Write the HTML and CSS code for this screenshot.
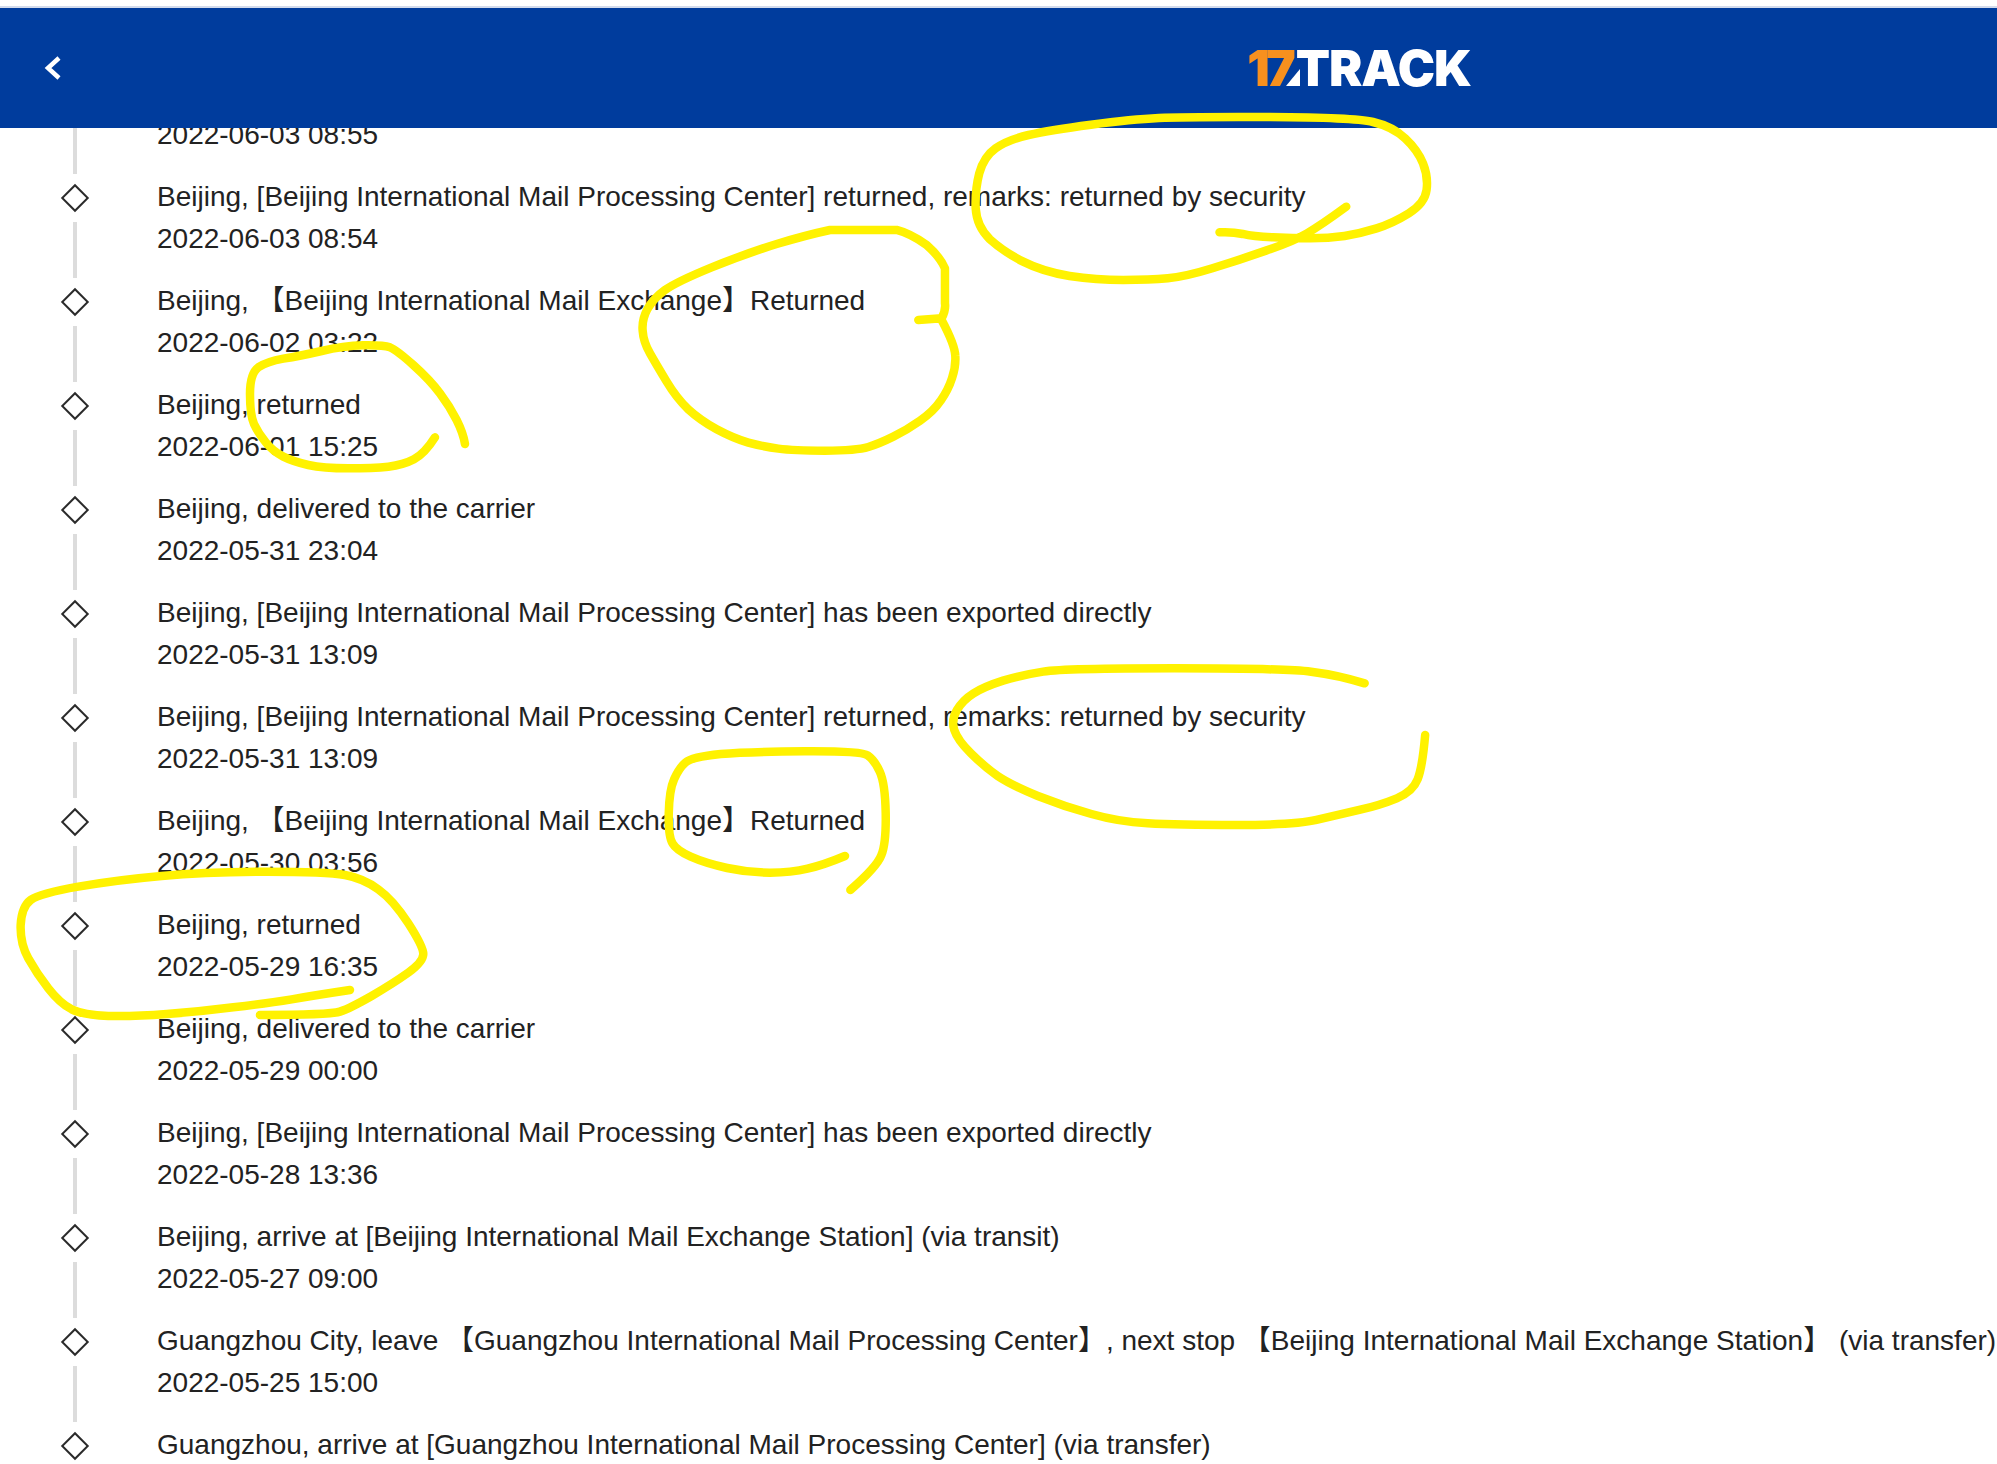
FILE: index.html
```html
<!DOCTYPE html>
<html lang="en">
<head>
<meta charset="utf-8">
<title>17TRACK</title>
<link rel="stylesheet" href="styles.css">
</head>
<body>
<header class="topbar">
  <svg class="back" width="20" height="26" viewBox="0 0 20 26"><path d="M16 3 5 13l11 10"/></svg>
  <div class="logo"><span class="logo-num">17</span><svg class="logo-slash" width="22" height="38" viewBox="0 0 22 38"><polygon points="22,20 22,37 8,37"/></svg><span class="logo-word">TRACK</span></div>
</header>
<ol class="timeline">
  <li class="event"><span class="mark"><i class="dot"></i><i class="line"></i></span><div class="info"><p class="desc">&nbsp;</p><p class="date">2022-06-03 08:55</p></div></li>
  <li class="event"><span class="mark"><i class="dot"></i><i class="line"></i></span><div class="info"><p class="desc">Beijing, [Beijing International Mail Processing Center] returned, remarks: returned by security</p><p class="date">2022-06-03 08:54</p></div></li>
  <li class="event"><span class="mark"><i class="dot"></i><i class="line"></i></span><div class="info"><p class="desc">Beijing, 【Beijing International Mail Exchange】Returned</p><p class="date">2022-06-02 03:22</p></div></li>
  <li class="event"><span class="mark"><i class="dot"></i><i class="line"></i></span><div class="info"><p class="desc">Beijing, returned</p><p class="date">2022-06-01 15:25</p></div></li>
  <li class="event"><span class="mark"><i class="dot"></i><i class="line"></i></span><div class="info"><p class="desc">Beijing, delivered to the carrier</p><p class="date">2022-05-31 23:04</p></div></li>
  <li class="event"><span class="mark"><i class="dot"></i><i class="line"></i></span><div class="info"><p class="desc">Beijing, [Beijing International Mail Processing Center] has been exported directly</p><p class="date">2022-05-31 13:09</p></div></li>
  <li class="event"><span class="mark"><i class="dot"></i><i class="line"></i></span><div class="info"><p class="desc">Beijing, [Beijing International Mail Processing Center] returned, remarks: returned by security</p><p class="date">2022-05-31 13:09</p></div></li>
  <li class="event"><span class="mark"><i class="dot"></i><i class="line"></i></span><div class="info"><p class="desc">Beijing, 【Beijing International Mail Exchange】Returned</p><p class="date">2022-05-30 03:56</p></div></li>
  <li class="event"><span class="mark"><i class="dot"></i><i class="line"></i></span><div class="info"><p class="desc">Beijing, returned</p><p class="date">2022-05-29 16:35</p></div></li>
  <li class="event"><span class="mark"><i class="dot"></i><i class="line"></i></span><div class="info"><p class="desc">Beijing, delivered to the carrier</p><p class="date">2022-05-29 00:00</p></div></li>
  <li class="event"><span class="mark"><i class="dot"></i><i class="line"></i></span><div class="info"><p class="desc">Beijing, [Beijing International Mail Processing Center] has been exported directly</p><p class="date">2022-05-28 13:36</p></div></li>
  <li class="event"><span class="mark"><i class="dot"></i><i class="line"></i></span><div class="info"><p class="desc">Beijing, arrive at [Beijing International Mail Exchange Station] (via transit)</p><p class="date">2022-05-27 09:00</p></div></li>
  <li class="event"><span class="mark"><i class="dot"></i><i class="line"></i></span><div class="info"><p class="desc">Guangzhou City, leave 【Guangzhou International Mail Processing Center】, next stop 【Beijing International Mail Exchange Station】 (via transfer)</p><p class="date">2022-05-25 15:00</p></div></li>
  <li class="event"><span class="mark"><i class="dot"></i><i class="line"></i></span><div class="info"><p class="desc">Guangzhou, arrive at [Guangzhou International Mail Processing Center] (via transfer)</p></div></li>
</ol>
<svg class="scribbles" width="1997" height="1464" viewBox="0 0 1997 1464">
  <g transform="translate(900 100) scale(.357 .3333)"><path d="M1250 320Q1180 375 1140 400Q1100 425 1025 452Q950 480 875 505Q800 530 750 535Q700 540 625 540Q550 540 475 528Q400 515 345 485Q290 455 252 418Q215 380 212 325Q210 270 222 220Q235 170 268 145Q300 120 360 105Q420 90 535 74Q650 58 725 54Q800 50 1035 51Q1270 52 1325 66Q1380 80 1415 115Q1450 150 1465 190Q1480 230 1475 270Q1470 310 1425 340Q1380 370 1335 385Q1290 400 1245 408Q1200 415 1150 415Q1100 415 1045 412Q990 410 960 402Q930 395 895 397"/></g>
  <g transform="translate(620 210) scale(.3333)"><path d="M895 330L965 325Q978 300 975 280L975 175Q960 140 920 105Q870 70 830 60L630 60Q560 75 470 102Q380 130 275 172Q170 215 135 240Q100 265 82 298Q65 330 68 362Q70 395 90 430Q110 465 140 515Q170 565 205 598Q240 630 290 658Q340 685 385 698Q430 710 475 716Q520 722 615 722Q710 722 745 711Q780 700 820 680Q860 660 900 632Q940 605 962 572Q985 540 996 505Q1008 470 1006 438Q1005 405 965 330"/></g>
  <g transform="translate(230 320) scale(.3333)"><path d="M615 352Q585 400 552 418Q520 435 475 440Q430 445 355 445Q280 445 235 435Q190 425 160 410Q130 395 108 368Q85 340 72 312Q60 285 60 222Q60 160 85 142Q110 125 160 116Q210 108 275 93Q340 78 400 76Q460 75 480 82Q500 90 550 135Q600 180 630 220Q660 260 680 300Q700 340 705 372"/></g>
  <g transform="translate(620 640) scale(.5357 .3333)"><path d="M1390 130Q1340 105 1290 95Q1240 85 1035 85Q830 85 790 95Q750 105 715 122Q680 140 660 160Q640 180 629 210Q618 240 624 270Q630 300 655 340Q680 380 705 408Q730 435 780 468Q830 500 880 522Q930 545 985 550Q1040 555 1150 555Q1260 555 1300 540Q1340 525 1380 510Q1420 495 1450 475Q1480 455 1489 418Q1498 380 1503 285"/></g>
  <g transform="translate(620 640) scale(.5357 .3333)"><path d="M420 648Q380 675 350 686Q320 698 280 698Q240 698 200 684Q160 670 132 650Q105 630 98 610Q90 590 91 520Q92 450 101 418Q110 385 122 368Q135 350 188 342Q240 335 345 334Q450 333 462 346Q475 360 485 395Q495 430 496 520Q497 610 488 645Q480 680 430 750"/></g>
  <g transform="translate(0 840) scale(.3333)"><path d="M1050 450Q950 465 875 478Q800 490 700 502Q600 515 500 522Q400 530 325 528Q250 525 215 508Q180 490 145 445Q110 400 85 355Q60 310 62 255Q65 200 92 180Q120 160 235 140Q350 120 485 108Q620 95 800 95Q980 95 1035 105Q1090 115 1135 148Q1180 180 1225 250Q1270 320 1270 342Q1270 365 1225 398Q1180 430 1115 468Q1050 505 1020 515Q990 525 780 525"/></g>
</svg>
</body>
</html>
```

FILE: styles.css
```css
* { box-sizing: border-box; }
html, body { margin: 0; height: 1464px; overflow: hidden; background: #fff; }
body {
  padding-top: 6px;
  font-family: "Liberation Sans", "Noto Sans CJK SC", sans-serif;
  color: #222;
}
.topbar {
  position: relative;
  z-index: 1;
  display: flex;
  align-items: center;
  height: 122px;
  padding: 0 526px 0 43px;
  background: #003c9d;
  border-top: 2px solid #d3dbec;
}
.back path { fill: none; stroke: #fff; stroke-width: 4.5; }
.logo {
  display: flex;
  align-items: center;
  margin-left: auto;
  font-family: Inter, "Liberation Sans", sans-serif;
  font-weight: 900;
  font-size: 50px;
  line-height: 1;
  letter-spacing: -1px;
}
.logo-num { color: #f7901e; letter-spacing: -4px; }
.logo-slash { margin-left: -14px; fill: #fff; }
.logo-word { color: #fff; margin-left: -4px; }
.timeline { list-style: none; margin: -56px 0 0; padding: 0; }
.event { display: flex; height: 104px; }
.mark {
  display: flex;
  flex-direction: column;
  align-items: center;
  width: 32px;
  margin-left: 59px;
  padding-top: 12px;
  flex: none;
}
.dot {
  width: 20px;
  height: 20px;
  flex: none;
  border: 2px solid #2b2b2b;
  transform: rotate(45deg);
}
.line {
  width: 4px;
  height: 56px;
  margin-top: 14px;
  background: #dcdcdc;
  flex: none;
}
.info { margin-left: 66px; white-space: nowrap; }
.desc, .date { margin: 0; font-size: 28px; line-height: 42px; }
.scribbles { position: absolute; left: 0; top: 0; z-index: 2; pointer-events: none; }
.scribbles path {
  fill: none;
  stroke: #fff200;
  stroke-width: 8.5;
  stroke-linecap: round;
  stroke-linejoin: round;
  vector-effect: non-scaling-stroke;
}
```
